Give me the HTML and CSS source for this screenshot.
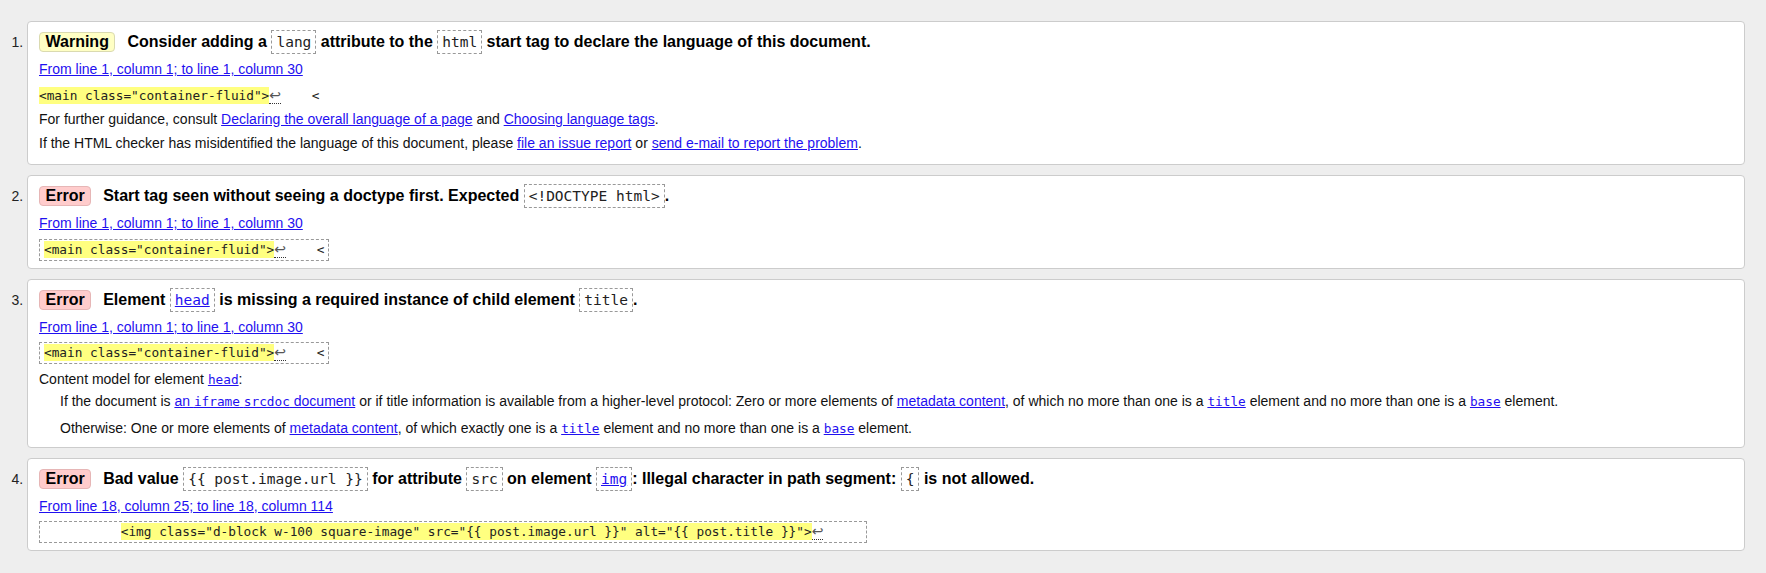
FILE: index.html
```html
<!DOCTYPE html>
<html lang="en">
<head>
<meta charset="utf-8">
<title>Validator messages</title>
<link rel="stylesheet" href="styles.css">
</head>
<body>
<ol class="messages">
  <li class="msg">
    <p class="title"><span class="badge badge-warning">Warning</span>Consider adding a <code class="tc">lang</code> attribute to the <code class="tc">html</code> start tag to declare the language of this document.</p>
    <p class="loc"><a href="#">From line 1, column 1; to line 1, column 30</a></p>
    <p class="extract extract-plain"><code><mark>&lt;main class="container-fluid"&gt;</mark><span class="lf">↩</span>    &lt;</code></p>
    <p class="info info-first">For further guidance, consult <a href="#">Declaring the overall language of a page</a> and <a href="#">Choosing language tags</a>.</p>
    <p class="info info-last">If the HTML checker has misidentified the language of this document, please <a href="#">file an issue report</a> or <a href="#">send e-mail to report the problem</a>.</p>
  </li>
  <li class="msg">
    <p class="title"><span class="badge badge-error">Error</span>Start tag seen without seeing a doctype first. Expected <code class="tc">&lt;!DOCTYPE html&gt;</code>.</p>
    <p class="loc"><a href="#">From line 1, column 1; to line 1, column 30</a></p>
    <p class="extract"><code class="box"><mark>&lt;main class="container-fluid"&gt;</mark><span class="lf">↩</span>    &lt;</code></p>
  </li>
  <li class="msg">
    <p class="title"><span class="badge badge-error">Error</span>Element <code class="tc"><a href="#">head</a></code> is missing a required instance of child element <code class="tc">title</code>.</p>
    <p class="loc"><a href="#">From line 1, column 1; to line 1, column 30</a></p>
    <p class="extract"><code class="box"><mark>&lt;main class="container-fluid"&gt;</mark><span class="lf">↩</span>    &lt;</code></p>
    <dl class="model">
      <dt>Content model for element <a href="#"><code>head</code></a>:</dt>
      <dd class="model-first">If the document is <a href="#">an <code>iframe</code> <code>srcdoc</code> document</a> or if title information is available from a higher-level protocol: Zero or more elements of <a href="#">metadata content</a>, of which no more than one is a <a href="#"><code>title</code></a> element and no more than one is a <a href="#"><code>base</code></a> element.</dd>
      <dd class="model-last">Otherwise: One or more elements of <a href="#">metadata content</a>, of which exactly one is a <a href="#"><code>title</code></a> element and no more than one is a <a href="#"><code>base</code></a> element.</dd>
    </dl>
  </li>
  <li class="msg">
    <p class="title"><span class="badge badge-error">Error</span>Bad value <code class="tc">{{ post.image.url }}</code> for attribute <code class="tc">src</code> on element <code class="tc"><a href="#">img</a></code>: Illegal character in path segment: <code class="tc">{</code> is not allowed.</p>
    <p class="loc"><a href="#">From line 18, column 25; to line 18, column 114</a></p>
    <p class="extract"><code class="box">          <mark>&lt;img class="d-block w-100 square-image" src="{{ post.image.url }}" alt="{{ post.title }}"&gt;</mark><span class="lf">↩</span>     </code></p>
  </li>
</ol>
</body>
</html>
```

FILE: styles.css
```css
html, body {
  margin: 0;
  background: #eeeeee;
}

body {
  font-family: "Liberation Sans", Arial, sans-serif;
  font-size: 14px;
  line-height: 16px;
  color: #111111;
}

a {
  color: #1f10f0;
  text-decoration: underline;
}

code {
  font-family: "DejaVu Sans Mono", "Liberation Mono", monospace;
  font-size: 12.75px;
}

.messages {
  margin: 0;
  padding: 21px 21px 0 27px;
}

.msg {
  background: #ffffff;
  border: 1px solid #cccccc;
  border-radius: 4px;
  padding: 7px 11px 7px;
  margin: 0 0 10px 0;
  color: #111111;
}

.msg::marker {
  color: #222222;
}

.msg p {
  margin: 0;
}

.title {
  font-size: 16px;
  line-height: 26px;
  font-weight: bold;
  color: #000000;
}

.badge {
  display: inline-block;
  line-height: 18px;
  padding: 0 5.5px;
  border-radius: 4px;
  border: 1px solid;
  margin-right: 12px;
}

.badge-warning {
  background: #ffffc4;
  border-color: #dadab0;
}

.badge-error {
  background: #ffcccc;
  border-color: #e6b6b6;
}

.tc {
  font-size: 14.5px;
  font-weight: normal;
  color: #222222;
  border: 1px dashed #999999;
  padding: 3px 4px;
}

.msg .loc {
  margin-top: 6px;
}

.msg .extract {
  margin-top: 7.5px;
  white-space: pre;
}

.extract code {
  display: inline-block;
  line-height: 16px;
  color: #222222;
}

.extract-plain code {
  padding: 3px 0;
}

.extract .box {
  border: 1px dashed #999999;
  padding: 2px 4px;
}

mark {
  background: #ffff80;
  color: #222222;
  padding: 1px 0;
}

.lf {
  font-family: "DejaVu Sans", sans-serif;
  font-size: 14px;
  line-height: 0;
  color: #555555;
  border-bottom: 1px dotted #333333;
}

.msg .info-first {
  margin-top: 4px;
}

.msg .info-last {
  margin-top: 8.5px;
  margin-bottom: 6px;
}

.model {
  margin: 7px 0 4px 0;
}

.model code {
  line-height: 0;
}

.model dd {
  margin-left: 21px;
}

.model .model-first {
  margin-top: 6px;
}

.model .model-last {
  margin-top: 10.5px;
}
```
